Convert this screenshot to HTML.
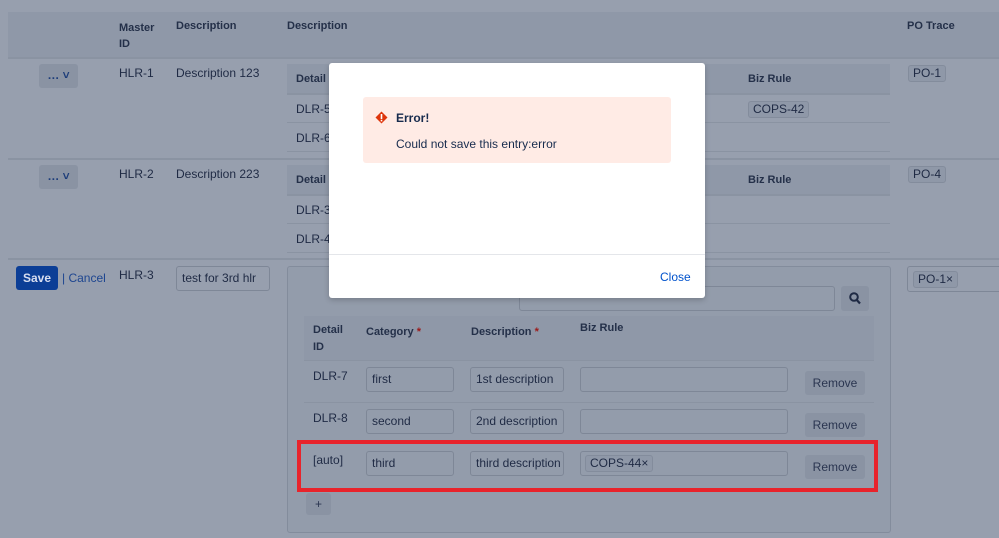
<!DOCTYPE html>
<html><head><meta charset="utf-8"><style>
body{margin:0;width:999px;height:538px;background:#979fae;font-family:"Liberation Sans",sans-serif;font-size:12px;color:#1f2a44;position:relative;overflow:hidden}
.a{position:absolute}
.hd{font-weight:bold;font-size:11px;color:#243049}
.band{background:#8f98a8}
.ln{height:2px;background:#8a93a2}
.tag{border:1px solid #838c9c;background:#8f98a8;border-radius:3px;padding:0 4px;line-height:15px;font-size:12px}
.inp{border:1px solid #7e8797;border-radius:3px;box-sizing:border-box;height:25px;line-height:23px;padding-left:5px;color:#1f2a44;white-space:nowrap;overflow:hidden}
.btn{background:#8a93a3;border-radius:3px;text-align:center;color:#2a3550}
.rm{width:60px;height:24px;line-height:24px}
</style></head><body>
<div class="a band" style="left:8px;top:12px;width:991px;height:46px"></div>
<div class="a hd" style="left:119px;top:20px;line-height:16px">Master<br>ID</div>
<div class="a hd" style="left:176px;top:20px">Description</div>
<div class="a hd" style="left:287px;top:20px">Description</div>
<div class="a hd" style="left:907px;top:20px">PO Trace</div>
<div class="a ln" style="left:8px;top:57px;width:991px"></div>
<div class="a ln" style="left:8px;top:158px;width:991px"></div>
<div class="a ln" style="left:8px;top:258px;width:991px"></div>

<div class="a btn" style="left:39px;top:64px;width:39px;height:24px;line-height:22px;font-weight:bold;color:#1d3d7a">… ˅</div>
<div class="a btn" style="left:39px;top:165px;width:39px;height:24px;line-height:22px;font-weight:bold;color:#1d3d7a">… ˅</div>
<div class="a" style="left:119px;top:66px">HLR-1</div>
<div class="a" style="left:176px;top:66px">Description 123</div>
<div class="a" style="left:119px;top:167px">HLR-2</div>
<div class="a" style="left:176px;top:167px">Description 223</div>

<div class="a band" style="left:287px;top:64px;width:603px;height:29px"></div>
<div class="a hd" style="left:296px;top:73px">Detail I</div>
<div class="a hd" style="left:748px;top:73px">Biz Rule</div>
<div class="a ln" style="left:287px;top:93px;width:603px"></div>
<div class="a" style="left:296px;top:102px">DLR-5</div>
<div class="a tag" style="left:748px;top:101px">COPS-42</div>
<div class="a ln" style="left:287px;top:122px;width:603px;height:1px"></div>
<div class="a" style="left:296px;top:131px">DLR-6</div>
<div class="a ln" style="left:287px;top:151px;width:603px;height:1px"></div>
<div class="a tag" style="left:908px;top:65px">PO-1</div>

<div class="a band" style="left:287px;top:165px;width:603px;height:29px"></div>
<div class="a hd" style="left:296px;top:174px">Detail I</div>
<div class="a hd" style="left:748px;top:174px">Biz Rule</div>
<div class="a ln" style="left:287px;top:194px;width:603px"></div>
<div class="a" style="left:296px;top:203px">DLR-3</div>
<div class="a ln" style="left:287px;top:223px;width:603px;height:1px"></div>
<div class="a" style="left:296px;top:232px">DLR-4</div>
<div class="a ln" style="left:287px;top:252px;width:603px;height:1px"></div>
<div class="a tag" style="left:908px;top:166px">PO-4</div>

<div class="a" style="left:16px;top:266px;width:42px;height:24px;background:#0c3e96;border-radius:3px;color:#d8def0;font-weight:bold;text-align:center;line-height:24px">Save</div>
<div class="a" style="left:62px;top:271px;color:#1d4590">| Cancel</div>
<div class="a" style="left:119px;top:268px">HLR-3</div>
<div class="a inp" style="left:176px;top:266px;width:94px">test for 3rd hlr</div>
<div class="a" style="left:907px;top:266px;width:100px;height:24px;border:1px solid #7e8797;border-radius:3px"></div>
<div class="a tag" style="left:913px;top:271px">PO-1×</div>

<div class="a" style="left:287px;top:266px;width:602px;height:265px;border:1px solid #838c9c;border-radius:3px;background:#939cab"></div>
<div class="a inp" style="left:519px;top:286px;width:316px;height:25px"></div>
<div class="a btn" style="left:841px;top:286px;width:28px;height:25px"></div>
<svg class="a" style="left:849px;top:292px" width="12" height="13" viewBox="0 0 12 13"><circle cx="5" cy="5" r="3.8" fill="none" stroke="#1f2a44" stroke-width="2"/><path d="M7.8 8 L11 11.5" stroke="#1f2a44" stroke-width="2.2"/></svg>
<div class="a band" style="left:304px;top:316px;width:570px;height:44px"></div>
<div class="a hd" style="left:313px;top:322px;line-height:17px">Detail<br>ID</div>
<div class="a hd" style="left:366px;top:326px">Category <span style="color:#9b1a1a">*</span></div>
<div class="a hd" style="left:471px;top:326px">Description <span style="color:#9b1a1a">*</span></div>
<div class="a hd" style="left:580px;top:322px">Biz Rule</div>
<div class="a ln" style="left:304px;top:360px;width:570px;height:1px"></div>
<div class="a" style="left:313px;top:369px">DLR-7</div>
<div class="a inp" style="left:366px;top:367px;width:88px">first</div>
<div class="a inp" style="left:470px;top:367px;width:94px">1st description</div>
<div class="a inp" style="left:580px;top:367px;width:208px"></div>
<div class="a btn rm" style="left:805px;top:371px">Remove</div>
<div class="a ln" style="left:304px;top:402px;width:570px;height:1px"></div>
<div class="a" style="left:313px;top:411px">DLR-8</div>
<div class="a inp" style="left:366px;top:409px;width:88px">second</div>
<div class="a inp" style="left:470px;top:409px;width:94px">2nd description</div>
<div class="a inp" style="left:580px;top:409px;width:208px"></div>
<div class="a btn rm" style="left:805px;top:413px">Remove</div>
<div class="a" style="left:313px;top:453px">[auto]</div>
<div class="a inp" style="left:366px;top:451px;width:88px">third</div>
<div class="a inp" style="left:470px;top:451px;width:94px">third description</div>
<div class="a inp" style="left:580px;top:451px;width:208px"></div>
<div class="a tag" style="left:585px;top:455px">COPS-44×</div>
<div class="a btn rm" style="left:805px;top:455px">Remove</div>
<div class="a" style="left:297px;top:440px;width:581px;height:52px;border:4px solid #e8232b;box-sizing:border-box"></div>
<div class="a btn" style="left:306px;top:493px;width:25px;height:22px;line-height:22px">+</div>

<div class="a" style="left:329px;top:63px;width:376px;height:235px;background:#fff;border-radius:3px;box-shadow:0 2px 6px rgba(0,0,0,.2)"></div>
<div class="a" style="left:363px;top:97px;width:308px;height:66px;background:#ffebe5;border-radius:3px"></div>
<svg class="a" style="left:375px;top:111px" width="13" height="13" viewBox="0 0 13 13"><path d="M6.5 0.5 L12.5 6.5 L6.5 12.5 L0.5 6.5Z" fill="#de350b"/><rect x="5.7" y="3" width="1.6" height="5" fill="#fff"/><rect x="5.7" y="8.8" width="1.6" height="1.6" fill="#fff"/></svg>
<div class="a" style="left:396px;top:111px;font-weight:bold;color:#172b4d">Error!</div>
<div class="a" style="left:396px;top:137px;color:#172b4d">Could not save this entry:error</div>
<div class="a" style="left:329px;top:254px;width:376px;height:1px;background:#e4e6ea"></div>
<div class="a" style="left:660px;top:270px;color:#0052cc">Close</div>
</body></html>
